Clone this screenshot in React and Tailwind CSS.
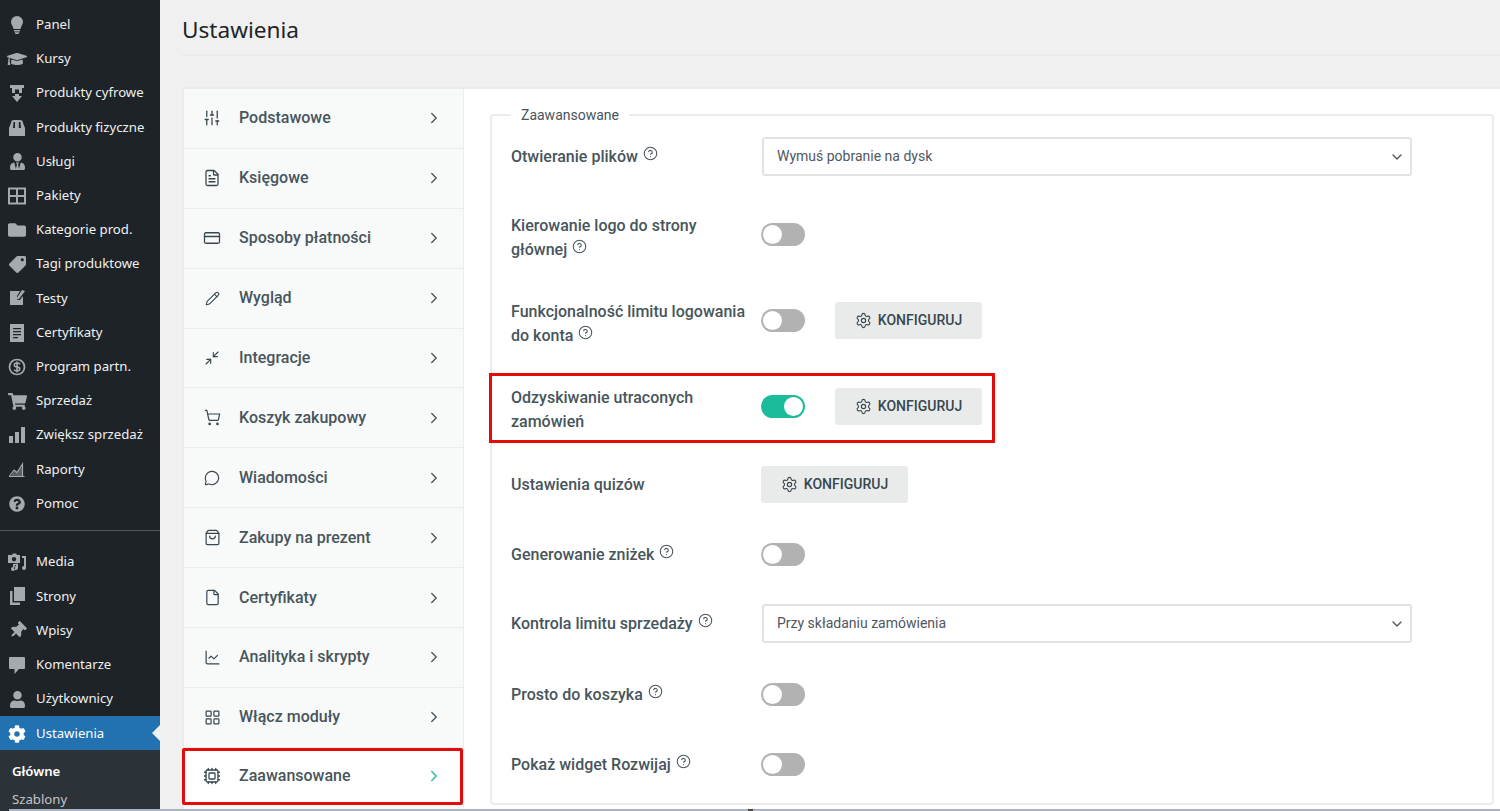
import React from 'react';
import {
  Sliders, FileText, CreditCard, Pencil, Minimize2, ShoppingCart, MessageCircle,
  ShoppingBag, File, ChartLine, LayoutGrid, Cpu, ChevronRight, ChevronDown, CircleHelp, Settings,
} from 'lucide-react';
import { FaGraduationCap, FaUserTie, FaFolder, FaTag, FaCog, FaUser, FaThumbtack, FaQuestionCircle, FaShoppingCart } from 'react-icons/fa';

const Dash = ({ children }) => (
  <svg width="20" height="20" viewBox="0 0 20 20" fill="#a7aaad">{children}</svg>
);

const IconBulb = () => <Dash><path d="M10 1a6 6 0 0 1 6 6c0 2.6-2 4-2.5 7h-7C6 11 4 9.6 4 7a6 6 0 0 1 6-6zM7 15h6v1.5H7zM7.5 17.3h5L11.5 19h-3z" /></Dash>;
const IconDownload = () => <Dash><path d="M3 2h14v3h-2v5h-3V6.5H8V10H5V5H3zM8 11h4v2h3l-5 6-5-6h3z" /></Dash>;
const IconStore = () => <Dash><path d="M4 5q0-3 3-3h6q3 0 3 3l2 5v8H2v-8zM6.5 4 6 10h2V4zM11.8 4v6h2.2l-.6-6z" fillRule="evenodd" /></Dash>;
const IconPackages = () => <Dash><path d="M1 1.5h18v17H1zM3 3.5V9h6V3.5zM11 3.5V9h6V3.5zM3 11v5.5h6V11zM11 11v5.5h6V11z" fillRule="evenodd" /></Dash>;
const IconTests = () => <Dash><path d="M3 3h10l-3 5v4h3l3-4v9H3z" /><path d="M15 2l3 1-6 8-2 .5.2-2z" /></Dash>;
const IconCert = () => <Dash><path d="M3 1h14v18H3zM6 5v1.2h8V5zM6 8v1.2h8V8zM6 11v1.2h8V11zM6 14v1.2h5V14z" fillRule="evenodd" /></Dash>;
const IconDollar = () => (
  <svg width="20" height="20" viewBox="0 0 20 20" fill="none" stroke="#a7aaad">
    <circle cx="10" cy="10" r="7.5" strokeWidth="1.7" />
    <path d="M13 7.2Q12 6 10 6 7.2 6 7.3 8t2.7 2q2.8 0 2.7 2t-2.7 2q-2 0-3-1.2M10 4.5v11" strokeWidth="1.6" />
  </svg>
);
const IconBars = () => <Dash><path d="M2 11h4v7H2zM8 7h4v11H8zM14 2h4v16h-4z" /></Dash>;
const IconReports = () => (
  <svg width="20" height="20" viewBox="0 0 20 20" fill="none" stroke="#a7aaad">
    <path d="M2 17.5h15.5M2.5 17 7 11l3 2.5L15.5 5v12.5" strokeWidth="1.2" />
    <path d="M7 11.5l3 2.5 5-7v10H4z" fill="#a7aaad" stroke="none" opacity=".45" />
  </svg>
);
const IconMedia = () => <Dash><path d="M1 3h4l1-1.5h3L10 3h3v8H1zM7 5a2.2 2.2 0 1 0 .01 0zM15 4h4v12a2 2 0 1 1-2-2V6h-2zM6 12l5-.5V16a2 2 0 1 1-2-2v-1l-1 .2V17a2 2 0 1 1-2-2z" fillRule="evenodd" /></Dash>;
const IconPages = () => <Dash><path d="M7 1h11v14H7zM3 5h2.5v11.5H13V19H3z" /></Dash>;
const IconComment = () => <Dash><path d="M3 2h14a1 1 0 0 1 1 1v10a1 1 0 0 1-1 1h-5l-4.5 5v-5H3a1 1 0 0 1-1-1V3a1 1 0 0 1 1-1z" /></Dash>;

const adminTop = [
  ['Panel', <IconBulb />],
  ['Kursy', <FaGraduationCap size={20} color="#a7aaad" />],
  ['Produkty cyfrowe', <IconDownload />],
  ['Produkty fizyczne', <IconStore />],
  ['Usługi', <FaUserTie size={17} color="#a7aaad" />],
  ['Pakiety', <IconPackages />],
  ['Kategorie prod.', <FaFolder size={18} color="#a7aaad" />],
  ['Tagi produktowe', <FaTag size={17} color="#a7aaad" className="-scale-x-100" />],
  ['Testy', <IconTests />],
  ['Certyfikaty', <IconCert />],
  ['Program partn.', <IconDollar />],
  ['Sprzedaż', <FaShoppingCart size={19} color="#a7aaad" />],
  ['Zwiększ sprzedaż', <IconBars />],
  ['Raporty', <IconReports />],
  ['Pomoc', <FaQuestionCircle size={16} color="#a7aaad" />],
];

const adminBottom = [
  ['Media', <IconMedia />],
  ['Strony', <IconPages />],
  ['Wpisy', <FaThumbtack size={17} color="#a7aaad" className="rotate-45" />],
  ['Komentarze', <IconComment />],
  ['Użytkownicy', <FaUser size={17} color="#a7aaad" />],
];

const settingsMenu = [
  ['Podstawowe', Sliders, 18],
  ['Księgowe', FileText, 18],
  ['Sposoby płatności', CreditCard, 18],
  ['Wygląd', Pencil, 15],
  ['Integracje', Minimize2, 16],
  ['Koszyk zakupowy', ShoppingCart, 17],
  ['Wiadomości', MessageCircle, 16],
  ['Zakupy na prezent', ShoppingBag, 17],
  ['Certyfikaty', File, 17],
  ['Analityka i skrypty', ChartLine, 17],
  ['Włącz moduły', LayoutGrid, 17],
];

const AdminItem = ({ label, icon }) => (
  <div className="flex h-[34.2px] shrink-0 items-center text-[13.2px] text-[#f0f0f1]">
    <span className="flex w-9 shrink-0 items-center justify-center pr-[2px]">{icon}</span>
    <span>{label}</span>
  </div>
);

const Sidebar = () => (
  <aside className="flex h-[811px] w-40 shrink-0 flex-col overflow-hidden bg-[#1d2327] pt-[7.9px] font-['Noto_Sans',sans-serif]">
    {adminTop.map(([label, icon]) => <AdminItem key={label} label={label} icon={icon} />)}
    <div className="mt-[9.1px] mb-[14.4px] h-px shrink-0 bg-[#54585c]" />
    {adminBottom.map(([label, icon]) => <AdminItem key={label} label={label} icon={icon} />)}
    <div className="relative flex h-[34px] shrink-0 items-center bg-[#2271b1] pt-px text-[13.2px] text-white">
      <span className="flex w-9 shrink-0 items-center justify-center pr-[2px]"><FaCog size={18} color="#fff" /></span>
      <span>Ustawienia</span>
      <span className="absolute top-[9px] right-0 h-0 w-0 border-y-[8px] border-r-[8px] border-y-transparent border-r-[#f0f0f1]" />
    </div>
    <div className="flex-1 bg-[#2c3338] pt-[12px] pl-3 text-[13.2px]">
      <div className="font-semibold text-white">Główne</div>
      <div className="mt-[8px] text-[#c3c4c7]">Szablony</div>
    </div>
  </aside>
);

const MenuRow = ({ label, Icon, size }) => (
  <div className="flex h-[59.9px] shrink-0 items-center border-b border-[#ececec] pr-[20px] pl-[19px]">
    <span className="flex w-[18px] shrink-0 justify-center"><Icon size={size} strokeWidth={1.7} color="#37474f" /></span>
    <span className="ml-[18px] flex-1 text-[16px] font-medium text-[#47555c]">{label}</span>
    <ChevronRight size={18} strokeWidth={1.7} color="#47555c" />
  </div>
);

const SettingsMenu = () => (
  <nav className="flex w-[280px] shrink-0 flex-col border-r border-[#ececec] bg-[#f8f9f9]">
    {settingsMenu.map(([label, Icon, size]) => <MenuRow key={label} label={label} Icon={Icon} size={size} />)}
    <div className="relative flex h-[57px] shrink-0 items-center bg-white pr-[20px] pl-[19px]">
      <Cpu size={18} strokeWidth={1.7} color="#37474f" />
      <span className="ml-[18px] flex-1 text-[16px] font-medium text-[#47555c]">Zaawansowane</span>
      <ChevronRight size={18} strokeWidth={1.7} color="#1abc9c" />
      <span className="absolute top-0 right-0 bottom-0 -left-[2px] rounded-[2px] border-[3px] border-[#e30b0b]" />
    </div>
  </nav>
);

const Help = () => <CircleHelp size={15} strokeWidth={1.7} color="#47555c" className="ml-[5px] inline-block align-[1px]" />;

const Toggle = ({ on }) => (
  <span className={`flex h-[23px] w-[44px] shrink-0 items-center rounded-full border-2 ${on ? 'justify-end border-[#1abc9c] bg-[#1abc9c]' : 'justify-start border-[#b2b2b2] bg-[#b2b2b2]'}`}>
    <span className="h-[19px] w-[19px] rounded-full bg-white" />
  </span>
);

const ConfigButton = () => (
  <button className="flex h-[37px] w-[147px] items-center justify-center gap-[6px] rounded-[3px] bg-[#e9ebeb] text-[14px] font-medium text-[#37474f]">
    <Settings size={17} strokeWidth={1.6} color="#37474f" />
    KONFIGURUJ
  </button>
);

const Select = ({ value }) => (
  <div className="ml-px flex h-[39px] w-[650px] items-center justify-between rounded-[3px] border-2 border-[#e2e2e2] pr-[5px] pl-[13px] text-[14px] text-[#50575e]">
    {value}
    <ChevronDown size={16} strokeWidth={2} color="#50575e" />
  </div>
);

// two-line labels sit a bit lower than the control next to them
const Row = ({ label, help, twoLine, children, className = '', highlight }) => (
  <div className={`relative flex items-center ${className}`}>
    <div className={`w-[250px] shrink-0 text-[16px] leading-[24px] font-medium text-[#47555c] ${twoLine ? 'mt-[8px]' : ''}`}>
      {label}{help && <Help />}
    </div>
    <div className="flex items-center gap-[30px]">{children}</div>
    {highlight && <span className="absolute -top-[5px] -bottom-[9px] -left-[22px] w-[506px] border-[3px] border-[#e30b0b]" />}
  </div>
);

const Advanced = () => (
  <div className="min-w-0 flex-1 pt-[18px] pr-[6px] pl-[26px]">
    <fieldset className="h-[698px] rounded-[4px] border-2 border-[#ececec] px-[19px] pt-[14px]">
      <legend className="px-[10px] text-[14px] leading-[16px] text-[#47555c]">Zaawansowane</legend>
      <Row label="Otwieranie plików" help className="h-[39px]"><Select value="Wymuś pobranie na dysk" /></Row>
      <Row label={<>Kierowanie logo do strony<br />głównej</>} help twoLine className="mt-[30px]"><Toggle /></Row>
      <Row label={<>Funkcjonalność limitu logowania<br />do konta</>} help twoLine className="mt-[30px]"><Toggle /><ConfigButton /></Row>
      <Row label={<>Odzyskiwanie utraconych<br />zamówień</>} twoLine className="mt-[30px]" highlight><Toggle on /><ConfigButton /></Row>
      <Row label="Ustawienia quizów" className="mt-[32px] h-[37px]"><ConfigButton /></Row>
      <Row label="Generowanie zniżek" help className="mt-[33px] h-[37px]"><Toggle /></Row>
      <Row label="Kontrola limitu sprzedaży" help className="mt-[31px] h-[39px]"><Select value="Przy składaniu zamówienia" /></Row>
      <Row label="Prosto do koszyka" help className="mt-[33px] h-[37px]"><Toggle /></Row>
      <Row label="Pokaż widget Rozwijaj" help className="mt-[33px] h-[37px]"><Toggle /></Row>
    </fieldset>
  </div>
);

export default function App() {
  return (
    <div className="relative flex h-[811px] w-[1500px] overflow-hidden bg-[#f0f0f1] font-['Roboto',sans-serif]">
      <Sidebar />
      <main className="flex min-w-0 flex-1 flex-col pl-[22px]">
        <header className="h-[56px] shrink-0 border-b-2 border-[#ebebeb]">
          <h1 className="pt-[15px] font-['Noto_Sans',sans-serif] text-[22.6px] leading-[30px] text-[#1d2327]">Ustawienia</h1>
        </header>
        <div className="mt-[31px] flex h-[724px] border-t-2 border-l-2 border-[#ebebeb] bg-white">
          <SettingsMenu />
          <Advanced />
        </div>
      </main>
      {/* browser window edge along the bottom of the screenshot */}
      <div className="absolute right-0 bottom-0 left-[9px] h-[2px] bg-[#aab4c4]" />
      <div className="absolute bottom-0 left-[748px] h-[2px] w-[5px] bg-[#4a4a4a]" />
    </div>
  );
}
